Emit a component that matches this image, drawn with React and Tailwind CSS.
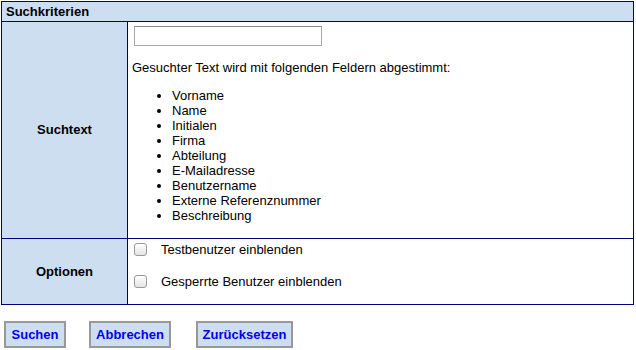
import React from 'react';

const items = [
    'Vorname',
    'Name',
    'Initialen',
    'Firma',
    'Abteilung',
    'E-Mailadresse',
    'Benutzername',
    'Externe Referenznummer',
    'Beschreibung',
];

function App() {
    return (
        <div className="w-[636px] h-[350px] bg-white text-[13px] text-black font-['Liberation_Sans',Arial,sans-serif] pt-px pl-px">
            <div className="w-[633px] border border-[#000080]">
                {/* header */}
                <div className="h-[20px] bg-[#cddef0] border-b border-[#000080] flex items-center pl-[4px] font-bold">
                    Suchkriterien
                </div>

                {/* suchtext */}
                <div className="flex border-b border-[#000080]">
                    <div className="w-[126px] shrink-0 bg-[#cddef0] border-r border-[#000080] flex items-center justify-center font-bold">
                        Suchtext
                    </div>
                    <div className="flex-1 pl-[4px] pt-[4px] pb-[15px]">
                        <input
                            type="text"
                            className="ml-[2px] block w-[188px] h-[20px] border border-[#aaa] border-t-[#888] bg-white"
                        />
                        <p className="mt-[14px] leading-[15px]">Gesuchter Text wird mit folgenden Feldern abgestimmt:</p>
                        <ul className="list-disc pl-[40px] mt-[13px] leading-[15px]">
                            {items.map((it) => (
                                <li key={it}>{it}</li>
                            ))}
                        </ul>
                    </div>
                </div>

                {/* optionen */}
                <div className="flex">
                    <div className="w-[126px] shrink-0 bg-[#cddef0] border-r border-[#000080] flex items-center justify-center font-bold">
                        Optionen
                    </div>
                    <div className="flex-1 pl-[6px] pt-[3px] pb-[15px] flex flex-col gap-[17px]">
                        <label className="flex items-center gap-[14px] h-[15px]">
                            <span className="w-[13px] h-[13px] rounded-[3px] border border-[#999] bg-gradient-to-b from-white to-[#e4e4e4]" />
                            Testbenutzer einblenden
                        </label>
                        <label className="flex items-center gap-[14px] h-[15px]">
                            <span className="w-[13px] h-[13px] rounded-[3px] border border-[#999] bg-gradient-to-b from-white to-[#e4e4e4]" />
                            Gesperrte Benutzer einblenden
                        </label>
                    </div>
                </div>
            </div>

            <div className="flex mt-[16px] ml-[3px]">
                <button className="h-[27px] w-[62px] bg-[#cddef0] border-2 border-[#999] text-[#0000ee] font-bold">
                    Suchen
                </button>
                <button className="ml-[23px] h-[27px] w-[82px] bg-[#cddef0] border-2 border-[#999] text-[#0000ee] font-bold">
                    Abbrechen
                </button>
                <button className="ml-[25px] h-[27px] w-[97px] bg-[#cddef0] border-2 border-[#999] text-[#0000ee] font-bold">
                    Zurücksetzen
                </button>
            </div>
        </div>
    );
}

export default App;
